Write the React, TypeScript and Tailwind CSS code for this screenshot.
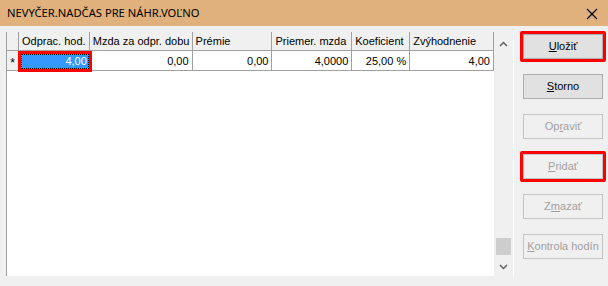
import React from 'react';

type Col = { label: string; width: number; value: string };

const COLS: Col[] = [
  { label: 'Odprac. hod.', width: 71, value: '4,00' },
  { label: 'Mzda za odpr. dobu', width: 103, value: '0,00' },
  { label: 'Prémie', width: 80, value: '0,00' },
  { label: 'Priemer. mzda', width: 80, value: '4,0000' },
  { label: 'Koeficient', width: 58, value: '25,00 %' },
  { label: 'Zvýhodnenie', width: 84, value: '4,00' },
];

type Btn = { pre: string; key: string; post: string; disabled?: boolean; marked?: boolean };

const BUTTONS: Btn[] = [
  { pre: '', key: 'U', post: 'ložiť', marked: true },
  { pre: '', key: 'S', post: 'torno' },
  { pre: 'Op', key: 'r', post: 'aviť', disabled: true },
  { pre: '', key: 'P', post: 'ridať', disabled: true, marked: true },
  { pre: 'Z', key: 'm', post: 'azať', disabled: true },
  { pre: '', key: 'K', post: 'ontrola hodín', disabled: true },
];

function Button({ b }: { b: Btn }) {
  const inner = (
    <div
      className={
        'flex h-[25px] w-[80px] items-center justify-center border text-[11px] ' +
        (b.disabled
          ? 'border-[#c4c4c4] bg-[#f0f0f0] text-[#a0a0a0]'
          : 'border-[#adadad] bg-[#e1e1e1] text-black')
      }
    >
      <span>
        {b.pre}
        <span className="underline underline-offset-1">{b.key}</span>
        {b.post}
      </span>
    </div>
  );
  if (!b.marked) return inner;
  return <div className="-m-[3px] rounded-[2px] border-[3px] border-[#ff0000]">{inner}</div>;
}

export default function App() {
  return (
    <div
      className="flex h-[286px] w-[608px] flex-col overflow-hidden bg-[#f0f0f0] text-black"
      style={{ fontFamily: '"Liberation Sans", Arial, sans-serif' }}
    >
      {/* title bar */}
      <div className="flex h-[26px] items-center justify-between bg-[#e0b17c] pl-[7px] pr-[10px]">
        <span className="text-[11.2px]" style={{ fontFamily: '"Noto Sans", sans-serif' }}>
          NEVYČER.NADČAS PRE NÁHR.VOĽNO
        </span>
        <svg width="12" height="12" viewBox="0 0 12 12" className="mt-[1px]">
          <path d="M1 1 L11 11 M11 1 L1 11" stroke="#000" strokeWidth="1.2" />
        </svg>
      </div>

      <div className="flex">
        {/* grid */}
        <div className="ml-[6px] mt-[6px] flex h-[244px] w-[508px] border-l border-[#a0a0a0] bg-white">
          <div className="w-[487px]">
            <div className="flex h-[19px] border-b border-[#a0a0a0] bg-[#f0f0f0]">
              <div className="w-[12px] border-r border-[#a0a0a0]" />
              {COLS.map((c) => (
                <div
                  key={c.label}
                  style={{ width: c.width }}
                  className="truncate border-r border-[#a0a0a0] pl-[3px] pt-[1px] text-[11px] leading-[17px]"
                >
                  {c.label}
                </div>
              ))}
            </div>
            <div className="flex h-[20px] border-b border-[#a0a0a0]">
              <div className="flex w-[12px] items-center justify-center border-r border-[#a0a0a0] bg-[#f0f0f0] pt-[4px] text-[12px]">
                *
              </div>
              {COLS.map((c, i) =>
                i === 0 ? (
                  <div key={c.label} style={{ width: c.width }} className="relative">
                    <div className="absolute -left-[1px] -right-[2px] top-0 -bottom-[2px] border-[3px] border-[#ff0000] bg-[#3399ff]">
                      <div className="flex h-full items-center justify-end border border-dotted border-black pr-[1px] text-[11px] text-white">
                        {c.value}
                      </div>
                    </div>
                  </div>
                ) : (
                  <div
                    key={c.label}
                    style={{ width: c.width }}
                    className="flex items-center justify-end border-r border-[#a0a0a0] pr-[3px] pt-[1px] text-[11px]"
                  >
                    {c.value}
                  </div>
                )
              )}
            </div>
          </div>
          {/* scrollbar */}
          <div className="flex w-[21px] flex-col items-center border-r border-white bg-[#f0f0f0]">
            <svg width="9" height="6" viewBox="0 0 9 6" className="mt-[9px]">
              <path d="M1 5 L4.5 1.5 L8 5" stroke="#606060" strokeWidth="1.5" fill="none" />
            </svg>
            <div className="flex-1" />
            <div className="mb-[9px] h-[17px] w-[15px] bg-[#cdcdcd]" />
            <svg width="9" height="6" viewBox="0 0 9 6" className="mb-[6px]">
              <path d="M1 1 L4.5 4.5 L8 1" stroke="#606060" strokeWidth="1.5" fill="none" />
            </svg>
          </div>
        </div>

        {/* buttons */}
        <div className="ml-[9px] mt-[8px] flex flex-col gap-[15px]">
          {BUTTONS.map((b) => (
            <Button key={b.pre + b.key + b.post} b={b} />
          ))}
        </div>
      </div>
    </div>
  );
}
